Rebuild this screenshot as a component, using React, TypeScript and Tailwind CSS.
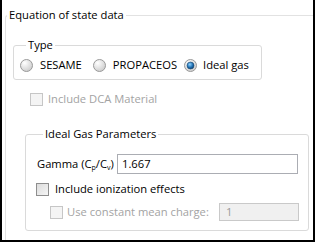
import React from 'react';

const Radio = ({ checked }: { checked?: boolean }) => (
  <svg width="13" height="13" viewBox="0 0 13 13" className="shrink-0">
    <defs>
      <radialGradient id="rg" cx="0.35" cy="0.3" r="0.8">
        <stop offset="0" stopColor="#ffffff" />
        <stop offset="1" stopColor="#c8c8c8" />
      </radialGradient>
      <radialGradient id="dot" cx="0.4" cy="0.35" r="0.7">
        <stop offset="0" stopColor="#8fd3ff" />
        <stop offset="0.6" stopColor="#1f6fb2" />
        <stop offset="1" stopColor="#0b3f6e" />
      </radialGradient>
    </defs>
    <circle cx="6.5" cy="6.5" r="6" fill="url(#rg)" stroke="#9a9a9a" strokeWidth="1" />
    {checked && <circle cx="6.5" cy="6.5" r="3.5" fill="url(#dot)" stroke="#18466e" strokeWidth="0.6" />}
  </svg>
);

const Check = ({ disabled }: { disabled?: boolean }) => (
  <div
    className={
      'w-[13px] h-[13px] shrink-0 border ' +
      (disabled
        ? 'border-[#c6c6c6] bg-[#f4f4f4]'
        : 'border-[#8e8e8e] bg-gradient-to-br from-[#dcdcdc] to-[#f6f6f6]')
    }
  />
);

export default function App() {
  return (
    <div
      className="w-[315px] h-[242px] bg-white border-l-2 border-r-2 border-b-2 border-black overflow-hidden text-[11.2px] leading-[16px] text-black whitespace-nowrap"
      style={{ fontFamily: '"Open Sans", "Noto Sans", sans-serif' }}
    >
      <fieldset className="ml-[3px] mt-[7px] border-l border-t border-[#e2e2e2] rounded-tl-[3px] h-[300px]">
        <legend className="ml-[1px] px-[2px]">Equation of state data</legend>

        {/* Type */}
        <fieldset className="ml-[7px] mt-[14px] w-[249px] border border-[#dadada] rounded-[3px] pt-[4px] pb-[6px] pl-[6px]">
          <legend className="ml-[6px] px-[2px]">Type</legend>
          <div className="flex items-center">
            <Radio />
            <span className="ml-[7px]">SESAME</span>
            <span className="ml-[11px] flex"><Radio /></span>
            <span className="ml-[7px]">PROPACEOS</span>
            <span className="ml-[7px] flex"><Radio checked /></span>
            <span className="ml-[6px]">Ideal gas</span>
          </div>
        </fieldset>

        <div className="flex items-center ml-[24px] mt-[11px] text-[#a3a3a3]">
          <Check disabled />
          <span className="ml-[5px]">Include DCA Material</span>
        </div>

        {/* Ideal Gas Parameters */}
        <fieldset className="ml-[19px] mt-[19px] w-[284px] border border-[#dadada] rounded-[3px] pt-[12px] pb-[9px] pl-[11px]">
          <legend className="ml-[6px] px-[2px]">Ideal Gas Parameters</legend>
          <div className="flex items-center">
            <span className="w-[80px] shrink-0">
              Gamma (C<sub className="text-[7px] leading-none">p</sub>/C<sub className="text-[7px] leading-none">v</sub>)
            </span>
            <div className="w-[181px] h-[20px] shrink-0 border border-[#abadb3] flex items-center pl-[4px]">1.667</div>
          </div>
          <div className="flex items-center mt-[7px] -ml-[1px]">
            <Check />
            <span className="ml-[6px]">Include ionization effects</span>
          </div>
          <div className="flex items-center mt-[6px] ml-[13px] text-[#a3a3a3]">
            <Check disabled />
            <span className="ml-[4px]">Use constant mean charge:</span>
            <div className="ml-auto mr-[9px] w-[80px] h-[18px] shrink-0 border border-[#c9c9c9] bg-[#f0f0f0] flex items-center pl-[6px] text-[#9a9a9a]">
              1
            </div>
          </div>
        </fieldset>
      </fieldset>
    </div>
  );
}
